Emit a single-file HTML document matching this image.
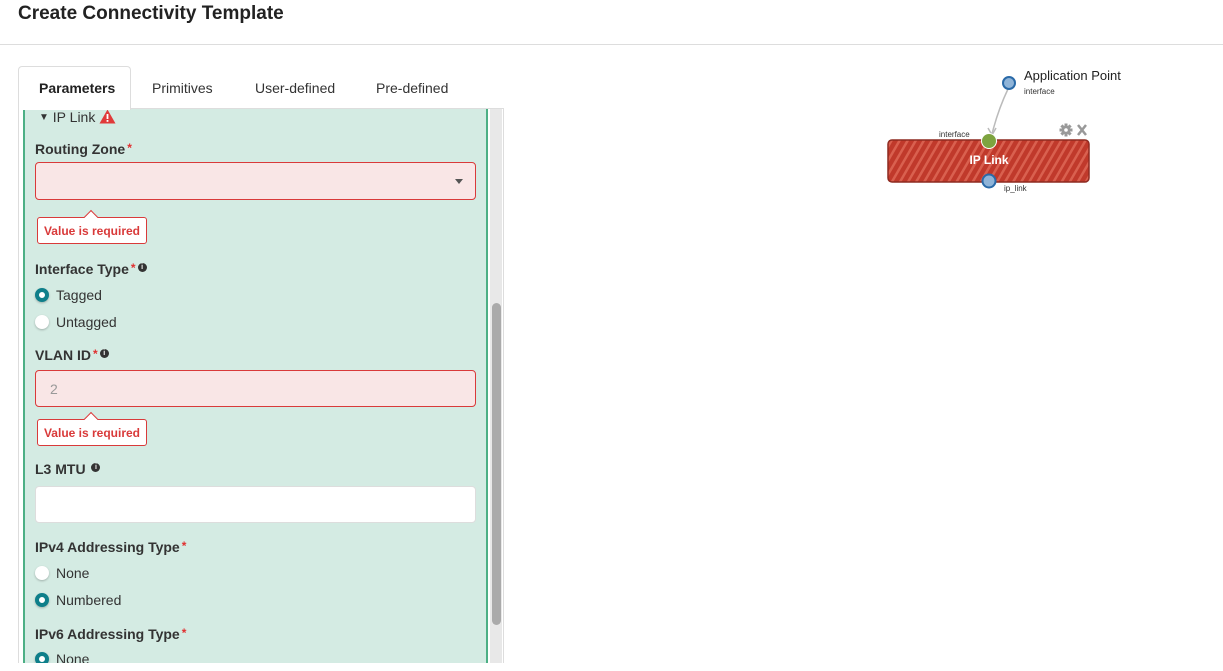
<!DOCTYPE html><html><head><style>
body{margin:0;width:1223px;height:671px;background:#fff;font-family:"Liberation Sans",sans-serif;position:relative;overflow:hidden;color:#333}
.a{position:absolute}
.lbl{position:absolute;left:35px;font-size:14px;font-weight:bold;color:#333}
.req{color:#e03030;font-size:12px;vertical-align:top;margin-left:2px}
.info{display:inline-block;width:9px;height:9px;border-radius:50%;background:#333;color:#fff;font-size:7px;text-align:center;line-height:9px;vertical-align:top;margin-top:2px;margin-left:2px;font-weight:bold}
.rad{position:absolute;left:35px;font-size:14px;color:#333}
.rad i{position:absolute;left:0;top:1px;width:14px;height:14px;border-radius:50%;background:#fff;box-shadow:0 1px 2px rgba(0,0,0,.25)}
.rad i.on{background:#fff;border:4px solid #0e7f8a;width:6px;height:6px}
.rad span{margin-left:21px}
.inp{position:absolute;left:35px;width:439px;height:35px;border-radius:4px}
.err{background:#f9e6e6;border:1px solid #d93a3a}
.tip{position:absolute;left:37px;width:108px;height:25px;border:1px solid #d93a3a;border-radius:3px;background:#fff;color:#d93a3a;font-size:12px;font-weight:bold;line-height:26px;text-align:center}
.tip:before{content:"";position:absolute;left:48px;top:-6px;width:9px;height:9px;background:#fff;border-left:1px solid #d93a3a;border-top:1px solid #d93a3a;transform:rotate(45deg)}
</style></head><body>
<div class="a" style="left:18px;top:3px;font-size:19px;font-weight:bold;color:#222">Create Connectivity Template</div>
<div class="a" style="left:0;top:44px;width:1223px;height:1px;background:#ddd"></div>
<div class="a" style="left:18px;top:66px;width:111px;height:43px;border:1px solid #ddd;border-bottom:none;border-radius:4px 4px 0 0;background:#fff;z-index:2"></div>
<div class="a" style="left:39px;top:80px;font-size:14px;font-weight:bold;color:#222;z-index:3">Parameters</div>
<div class="a" style="left:152px;top:80px;font-size:14px;color:#333">Primitives</div>
<div class="a" style="left:255px;top:80px;font-size:14px;color:#333">User-defined</div>
<div class="a" style="left:376px;top:80px;font-size:14px;color:#333">Pre-defined</div>
<div class="a" style="left:18px;top:108px;width:484px;height:555px;border:1px solid #ddd;background:#fff"></div>
<div class="a" style="left:23px;top:109px;width:461px;height:554px;background:#d4ebe3;border-left:2px solid #4caf85;border-right:2px solid #4caf85"></div>
<div class="a" style="left:490px;top:109px;width:12px;height:554px;background:#e8e8e8"></div>
<div class="a" style="left:492px;top:303px;width:9px;height:322px;background:#aaa;border-radius:5px"></div>
<div class="a" style="left:39px;top:109px;font-size:14px;color:#333"><span style="font-size:10px;vertical-align:2px">▼</span> IP Link <svg width="17" height="15" viewBox="0 0 17 15" style="vertical-align:-2px"><path d="M8.5 0.5 L16.5 14.5 L0.5 14.5Z" fill="#e03a3a"/><rect x="7.6" y="5" width="1.8" height="5" fill="#fff"/><rect x="7.6" y="11" width="1.8" height="1.8" fill="#fff"/></svg></div>
<div class="lbl" style="top:141px">Routing Zone<span class="req">*</span></div>
<div class="inp err" style="top:162px;height:36px"><div class="a" style="right:12px;top:16px;border:4px solid transparent;border-top:5px solid #555;border-bottom:none"></div></div>
<div class="tip" style="top:217px">Value is required</div>
<div class="lbl" style="top:261px">Interface Type<span class="req">*</span><span class="info">i</span></div>
<div class="rad" style="top:287px"><i class="on"></i><span>Tagged</span></div>
<div class="rad" style="top:314px"><i></i><span>Untagged</span></div>
<div class="lbl" style="top:347px">VLAN ID<span class="req">*</span><span class="info">i</span></div>
<div class="inp err" style="top:370px"><span class="a" style="left:14px;top:10px;font-size:14px;color:#999">2</span></div>
<div class="tip" style="top:419px">Value is required</div>
<div class="lbl" style="top:461px">L3 MTU <span class="info">i</span></div>
<div class="inp" style="top:486px;background:#fff;border:1px solid #ddd"></div>
<div class="lbl" style="top:539px">IPv4 Addressing Type<span class="req">*</span></div>
<div class="rad" style="top:565px"><i></i><span>None</span></div>
<div class="rad" style="top:592px"><i class="on"></i><span>Numbered</span></div>
<div class="lbl" style="top:626px">IPv6 Addressing Type<span class="req">*</span></div>
<div class="rad" style="top:651px"><i class="on"></i><span>None</span></div>
<div class="a" style="left:18px;top:663px;width:486px;height:8px;background:#fff"></div>
<svg class="a" style="left:880px;top:60px" width="260" height="140" viewBox="0 0 260 140">
<defs><pattern id="h" width="7" height="7" patternUnits="userSpaceOnUse" patternTransform="rotate(30)"><rect width="7" height="7" fill="#c0392b"/><rect width="2.5" height="7" fill="#d9604f"/></pattern></defs>
<path d="M128 29 Q118 50 112 74" stroke="#bbb" stroke-width="1.5" fill="none"/><path d="M108 68 L112 75 L116 68" stroke="#bbb" stroke-width="1.5" fill="none"/>
<rect x="8" y="80" width="201" height="42" rx="4" fill="url(#h)" stroke="#8e2a20" stroke-width="1.5"/>
<text x="109" y="104" font-size="12" font-weight="bold" fill="#fff" text-anchor="middle" font-family="Liberation Sans">IP Link</text>
<circle cx="129" cy="23" r="6" fill="#8fb4d8" stroke="#2a6aa8" stroke-width="2"/>
<circle cx="109" cy="81" r="7.5" fill="#7da33f" stroke="#fff" stroke-width="1"/>
<circle cx="109" cy="121" r="6.5" fill="#8fb4d8" stroke="#2a6aa8" stroke-width="2"/>
<text x="144" y="20" font-size="13" fill="#222" font-family="Liberation Sans">Application Point</text>
<text x="144" y="34" font-size="8" fill="#333" font-family="Liberation Sans">interface</text>
<text x="59" y="77" font-size="8" fill="#333" font-family="Liberation Sans">interface</text>
<text x="124" y="131" font-size="8" fill="#333" font-family="Liberation Sans">ip_link</text>
<g transform="translate(186,70)" fill="#999"><circle r="4.5"/><rect x="-1.5" y="-6.5" width="3" height="13"/><rect x="-6.5" y="-1.5" width="13" height="3"/><rect x="-1.5" y="-6.5" width="3" height="13" transform="rotate(45)"/><rect x="-1.5" y="-6.5" width="3" height="13" transform="rotate(-45)"/><circle r="1.8" fill="#fff"/></g>
<path d="M198 65 L206 75 M206 65 L198 75" stroke="#999" stroke-width="2.5"/>
</svg>
</body></html>
